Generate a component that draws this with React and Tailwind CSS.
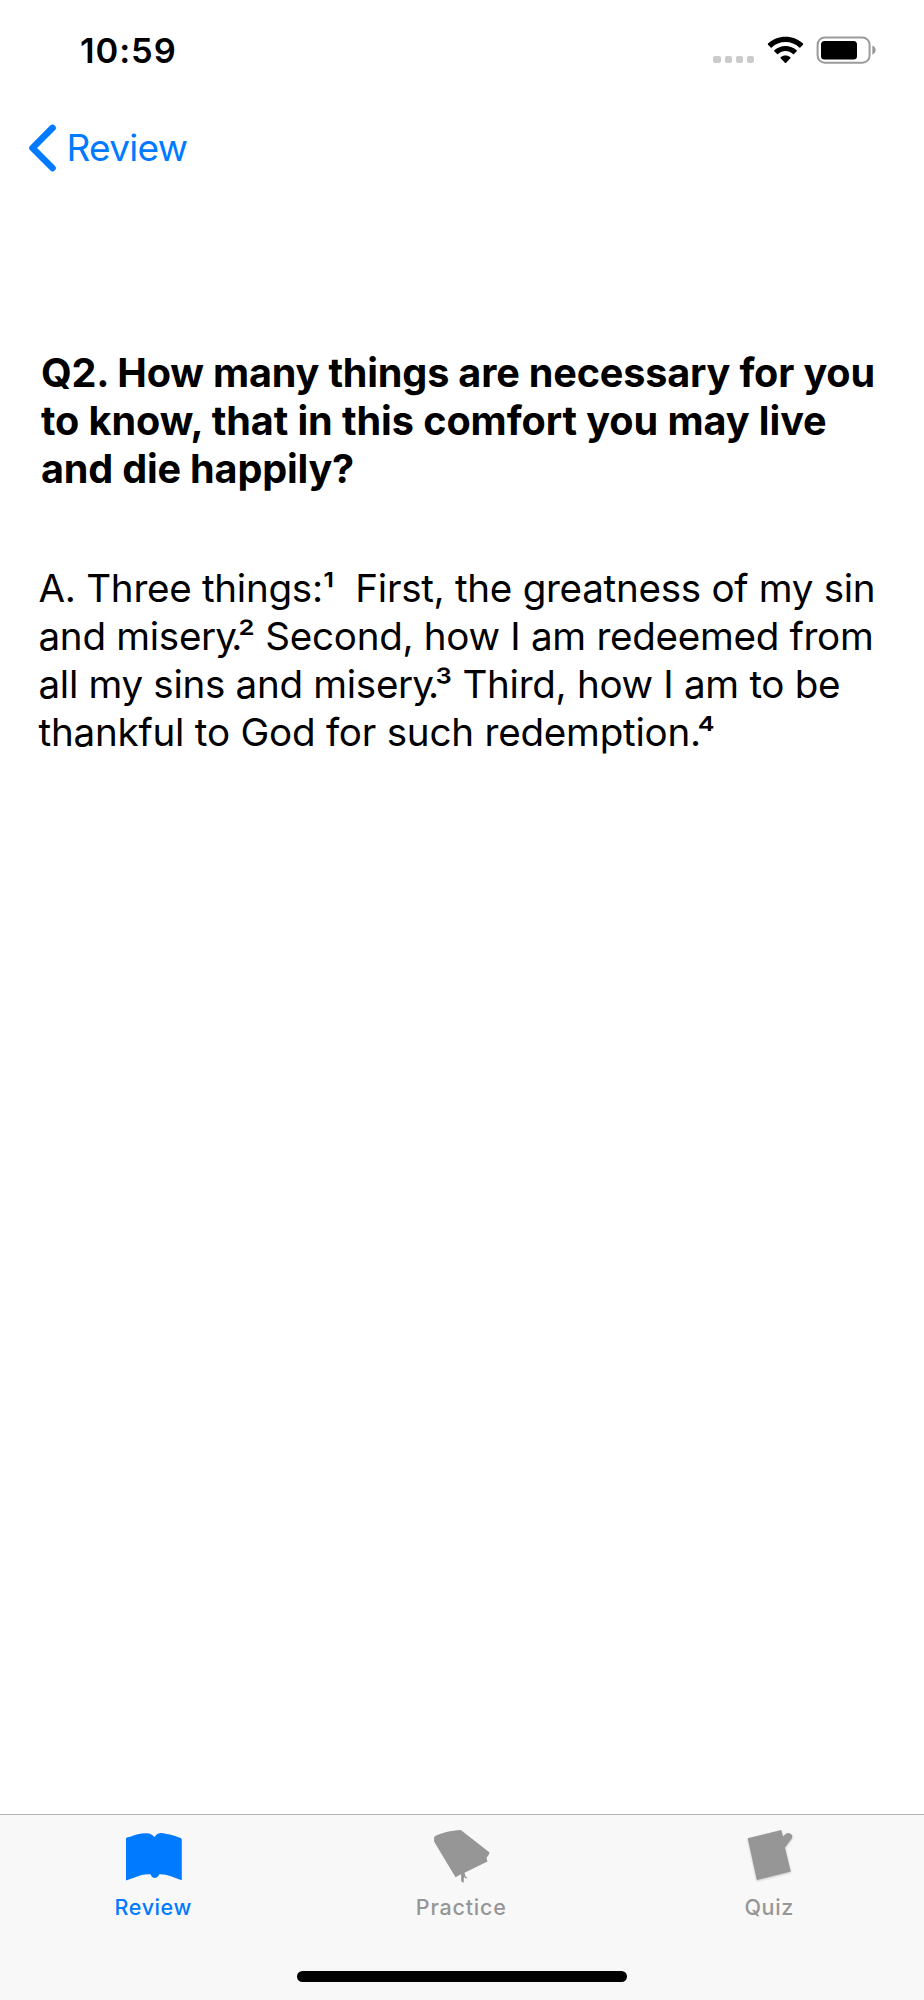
const question = [
  { text: 'Q2. How many things are necessary for you', tracking: 'tracking-[-0.17px]' },
  { text: 'to know, that in this comfort you may live', tracking: 'tracking-[-0.06px]' },
  { text: 'and die happily?', tracking: 'tracking-[-0.18px]' },
];

function StatusBar() {
  return (
    <header className="flex h-[100px] shrink-0 items-center justify-between pr-[47px] pl-[80px]">
      <span className="pt-[2px] text-[34.5px] leading-[40px] font-semibold tracking-[0.9px]">10:59</span>
      <div className="flex h-[28px] items-end">
        <div className="mr-[13px] mb-px flex gap-[3.8px]">
          <i className="size-[7.3px] rounded-[2px] bg-[#cbcbcb]" />
          <i className="size-[7.3px] rounded-[2px] bg-[#cbcbcb]" />
          <i className="size-[7.3px] rounded-[2px] bg-[#cbcbcb]" />
          <i className="size-[7.3px] rounded-[2px] bg-[#cbcbcb]" />
        </div>
        <svg className="mr-[12px]" width="37" height="28" viewBox="0 0 37 28">
          <path d="M18.5 .7C25.2 .7 31.4 3.3 36 7.6C36.3 7.9 36.3 8.4 36 8.7L33.3 11.4C33 11.7 32.5 11.7 32.2 11.4C28.6 8 23.8 6 18.5 6C13.2 6 8.4 8 4.8 11.4C4.5 11.7 4 11.7 3.7 11.4L1 8.7C.7 8.4 .7 7.9 1 7.6C5.6 3.3 11.8 .7 18.5 .7Z" />
          <path d="M18.5 9.9C22.8 9.9 26.7 11.5 29.7 14.2C30 14.5 30 15 29.7 15.3L27 18C26.7 18.3 26.2 18.3 25.9 18C23.9 16.2 21.3 15.1 18.5 15.1C15.7 15.1 13.1 16.2 11.1 18C10.8 18.3 10.3 18.3 10 18L7.3 15.3C7 15 7 14.5 7.3 14.2C10.3 11.5 14.2 9.9 18.5 9.9Z" />
          <path d="M18.5 19.5C20.3 19.5 22 20.1 23.3 21.2C23.7 21.5 23.7 22 23.4 22.3L19.1 26.8C18.7 27.2 18.2 27.2 17.9 26.8L13.6 22.3C13.3 22 13.3 21.5 13.7 21.2C15 20.1 16.7 19.5 18.5 19.5Z" />
        </svg>
        <svg width="61" height="28" viewBox="0 0 61 28">
          <rect x="1.6" y="1.5" width="52" height="25.2" rx="7.2" fill="none" stroke="#9b9b9b" strokeWidth="2" />
          <rect x="5" y="4.9" width="36" height="18.7" rx="3.5" />
          <path d="M56.4 9.6C58.4 10.4 59.6 12.1 59.6 14.1S58.4 17.9 56.4 18.7Z" fill="#969696" />
        </svg>
      </div>
    </header>
  );
}

function Line({ tracking, children }) {
  return <span className={`block h-[48px] whitespace-nowrap ${tracking}`}>{children}</span>;
}

function Note({ children }) {
  return <span className="align-[-1.5px] leading-none">{children}</span>;
}

function Tab({ label, color, tracking, children }) {
  return (
    <button className={`flex flex-1 flex-col items-center ${color}`}>
      <svg className="mt-[11px]" width="62" height="62" viewBox="0 0 62 62" fill="currentColor">
        {children}
      </svg>
      <span className={`mt-[5px] mr-[1.5px] text-[21.5px] leading-[28px] font-medium ${tracking}`}>{label}</span>
    </button>
  );
}

export default function App() {
  return (
    <div className="flex h-[2000px] w-[924px] flex-col overflow-hidden bg-white font-[Inter,'Liberation_Sans',sans-serif] text-black">
      <StatusBar />
      <nav className="flex h-[96px] shrink-0 items-center pl-[28px] text-[#007aff]">
        <svg width="29" height="48" viewBox="0 0 29 48" fill="none" stroke="currentColor" strokeWidth="6.6" strokeLinecap="round" strokeLinejoin="round">
          <path d="M24.5 3.9L4.5 24L24.5 44" />
        </svg>
        <span className="ml-[9.5px] text-[37px] leading-[44px] tracking-[-0.7px]">Review</span>
      </nav>
      <main className="flex-1 pt-[153px]">
        <h1 className="pl-[41px] text-[39.6px] leading-[48px] font-bold">
          {question.map((line) => (
            <Line key={line.text} tracking={line.tracking}>{line.text}</Line>
          ))}
        </h1>
        <p className="mt-[71px] pl-[38.5px] text-[38.6px] leading-[48px]">
          <Line tracking="tracking-[-0.28px]">A. Three things:<Note>¹</Note>{'\u00a0'} First, the greatness of my sin</Line>
          <Line tracking="tracking-[-0.29px]">
            and miser<span className="tracking-[-4.2px]">y.</span><Note>²</Note> Second, how I am redeemed from
          </Line>
          <Line tracking="tracking-[-0.3px]">
            all my sins and miser<span className="tracking-[-4.2px]">y.</span><Note>³</Note> Third, how I am to be
          </Line>
          <Line tracking="tracking-[-0.22px]">
            thankful to God for such redemption<span className="tracking-[-4px]">.</span><Note>⁴</Note>
          </Line>
        </p>
      </main>
      <footer className="flex h-[186px] shrink-0 flex-col border-t border-[#b2b2b2] bg-[#f8f8f8]">
        <div className="flex h-[156px]">
          <Tab label="Review" color="text-[#007aff]" tracking="tracking-[0.6px]">
            <path d="M3 12.2Q4.7 10.8 6.5 11.1C12 8.8 17 7.4 23.5 7.3Q28.5 7.6 31.5 11Q34 6.8 38.8 7Q46 8 56.2 11.4Q57.5 11.2 58.8 13.3V54.3C51 51.5 43.5 48 36.2 48.4Q34.5 51.8 31.8 51.8Q29 52.5 27.8 48.6C21 47 12 51.5 3 54.5Z" />
          </Tab>
          <Tab label="Practice" color="text-[#969696]" tracking="tracking-[0.8px]">
            <path d="M3.8 10.3C10 7 20 4.3 29.8 4L58.6 26.6L57.8 28.8L55.5 31.8L56.4 35.6L33.5 46.8L34.5 50.3L36.6 52.3L34.2 52.2L33 50.8L32.6 57L30.2 55.2L30.1 48.2L24.5 51.2L3.2 15.7Q2.2 12 3.8 10.3Z" />
          </Tab>
          <Tab label="Quiz" color="text-[#969696]" tracking="tracking-[0.7px]">
            <path className="drop-shadow-[0_1px_1px_#0003]" d="M8.7 12.2L42.3 4L44 10.6L47.2 7.6Q51 5.8 53.3 9.6Q53.6 11.5 52 13.6L46 21.5L51.8 45.5L17.8 54Z" />
          </Tab>
        </div>
        <div className="mx-auto h-[11px] w-[330px] rounded-full bg-black" />
      </footer>
    </div>
  );
}
